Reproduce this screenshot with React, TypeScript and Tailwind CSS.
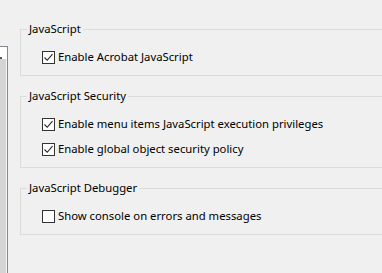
import React from 'react';

type CheckProps = {
  label: string;
  checked?: boolean;
};

const CheckRow: React.FC<CheckProps> = ({ label, checked }) => (
  <div className="flex items-center h-[16px]">
    <span className="w-[13px] h-[13px] border border-[#333333] bg-white flex items-center justify-center shrink-0">
      {checked && (
        <svg width="11" height="11" viewBox="0 0 11 11">
          <path d="M1.5 5.5 L4.2 8.3 L9.5 2.2" fill="none" stroke="#222222" strokeWidth="1.1" />
        </svg>
      )}
    </span>
    <span className="ml-[3px] whitespace-nowrap">{label}</span>
  </div>
);

type GroupProps = {
  title: string;
  children: React.ReactNode;
  first?: boolean;
};

const Group: React.FC<GroupProps> = ({ title, children, first }) => (
  <fieldset className={`border border-[#dcdcdc] w-[372px] pt-[12px] pb-[10px] ${first ? '' : 'mt-[12px]'}`}>
    <legend className="ml-[6px] px-[2px] leading-[16px]">{title}</legend>
    <div className="flex flex-col gap-[9px] pl-[21px]">{children}</div>
  </fieldset>
);

const App: React.FC = () => {
  return (
    <div
      className="w-[382px] h-[273px] overflow-hidden bg-[#f0f0f0] text-black text-[11.3px] flex"
      style={{ fontFamily: '"Noto Sans", "Segoe UI", sans-serif' }}
    >
      <div className="w-[8px] mt-[46px] border-t border-r border-[#828790] flex flex-col shrink-0">
        <div className="h-[12px] bg-white relative">
          <div className="absolute left-0 top-[10px] w-[2px] h-[2px] bg-[#555555]" />
        </div>
        <div className="flex-1 bg-[#d4d4d4] border-r border-[#f5f5f5]" />
      </div>
      <div className="pl-[12px] pt-[21px] flex flex-col">
        <Group title="JavaScript" first>
          <CheckRow label="Enable Acrobat JavaScript" checked />
        </Group>
        <Group title="JavaScript Security">
          <CheckRow label="Enable menu items JavaScript execution privileges" checked />
          <CheckRow label="Enable global object security policy" checked />
        </Group>
        <Group title="JavaScript Debugger">
          <CheckRow label="Show console on errors and messages" />
        </Group>
      </div>
    </div>
  );
};

export default App;
